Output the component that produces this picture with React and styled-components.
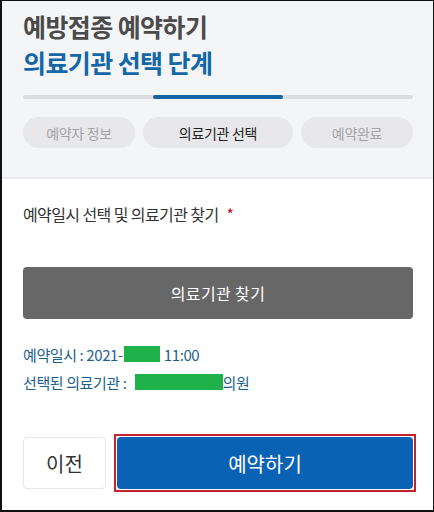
import React from "react";
import styled, { createGlobalStyle } from "styled-components";

const Global = createGlobalStyle`
  html, body { margin: 0; padding: 0; background: #fff; }
  body { font-family: "Noto Sans CJK KR", "Noto Sans", sans-serif; }
  * { box-sizing: border-box; }
`;

const Frame = styled.div`
  width: 434px;
  height: 512px;
  border: 1px solid #111;
  border-left-width: 2px;
  border-bottom-width: 2px;
  display: flex;
  flex-direction: column;
  overflow: hidden;
  background: #fff;
`;

const Header = styled.header`
  background: #f4f5f7;
  border-bottom: 2px solid #ebebef;
  padding: 7px 20px 0 21px;
  height: 178px;
`;

const Title = styled.h1`
  margin: 0;
  font-size: 25px;
  line-height: 36px;
  font-weight: 700;
  letter-spacing: -0.6px;
  color: ${(p) => (p.$accent ? "#1467a6" : "#4b4b4b")};
`;

const Track = styled.div`
  margin-top: 15px;
  height: 4px;
  border-radius: 2px;
  background: #dddddf;
  display: grid;
  grid-template-columns: 1fr 1fr 1fr;
`;

const Fill = styled.div`
  grid-column: ${(p) => p.$step};
  background: #1363a5;
  border-radius: 2px;
`;

const Steps = styled.div`
  margin-top: 18px;
  display: grid;
  grid-template-columns: 112px 1fr 112px;
  gap: 8px;
`;

const Step = styled.div`
  height: 31px;
  border-radius: 16px;
  background: #e8e8ea;
  display: flex;
  align-items: center;
  justify-content: center;
  font-size: 14px;
  letter-spacing: -0.3px;
  color: ${(p) => (p.$active ? "#222" : "#a4a4a4")};
`;

const Body = styled.main`
  flex: 1;
  padding: 24px 20px 0 21px;
  display: flex;
  flex-direction: column;
`;

const Label = styled.p`
  margin: 0;
  font-size: 16px;
  line-height: 22px;
  color: #333;
  letter-spacing: -0.6px;
`;

const Star = styled.span`
  color: #c0102a;
  margin-left: 8px;
`;

const SearchButton = styled.button`
  margin-top: 42px;
  height: 52px;
  border: none;
  border-radius: 4px;
  background: #676767;
  color: #fff;
  font-family: inherit;
  font-size: 16px;
  letter-spacing: 0.4px;
`;

const Info = styled.div`
  margin-top: 25px;
  display: flex;
  flex-direction: column;
  gap: 8px;
`;

const InfoLine = styled.div`
  display: flex;
  align-items: center;
  height: 20px;
  font-size: 15px;
  color: #1c5f8e;
  letter-spacing: -0.4px;
  white-space: pre;
`;

const Mask = styled.span`
  display: inline-block;
  width: ${(p) => p.$w}px;
  height: 16px;
  background: #1fb24b;
  margin: 0 ${(p) => p.$right}px 0 ${(p) => p.$left}px;
`;

const Actions = styled.div`
  margin-top: auto;
  margin-bottom: 21px;
  display: grid;
  grid-template-columns: 83px 1fr;
  gap: 8px;
  align-items: center;
`;

const PrevButton = styled.button`
  height: 52px;
  border: 1px solid #e6e6e6;
  border-radius: 4px;
  background: #fff;
  color: #333;
  font-family: inherit;
  font-size: 20px;
`;

const Highlight = styled.div`
  border: 2px solid #c4232e;
  padding: 1px;
  margin: -3px -3px -3px 0;
`;

const SubmitButton = styled.button`
  width: 100%;
  height: 52px;
  border: none;
  border-radius: 4px;
  background: #0a62b4;
  color: #fff;
  font-family: inherit;
  font-size: 20px;
`;

export default function App() {
  return (
    <>
      <Global />
      <Frame>
        <Header>
          <Title>예방접종 예약하기</Title>
          <Title $accent>의료기관 선택 단계</Title>
          <Track>
            <Fill $step={2} />
          </Track>
          <Steps>
            <Step>예약자 정보</Step>
            <Step $active>의료기관 선택</Step>
            <Step>예약완료</Step>
          </Steps>
        </Header>
        <Body>
          <Label>
            예약일시 선택 및 의료기관 찾기<Star>*</Star>
          </Label>
          <SearchButton>의료기관 찾기</SearchButton>
          <Info>
            <InfoLine>
              예약일시 : 2021-<Mask $w={36} $left={1} $right={4} />11:00
            </InfoLine>
            <InfoLine>
              선택된 의료기관 :<Mask $w={88} $left={8} $right={0} />의원
            </InfoLine>
          </Info>
          <Actions>
            <PrevButton>이전</PrevButton>
            <Highlight>
              <SubmitButton>예약하기</SubmitButton>
            </Highlight>
          </Actions>
        </Body>
      </Frame>
    </>
  );
}
